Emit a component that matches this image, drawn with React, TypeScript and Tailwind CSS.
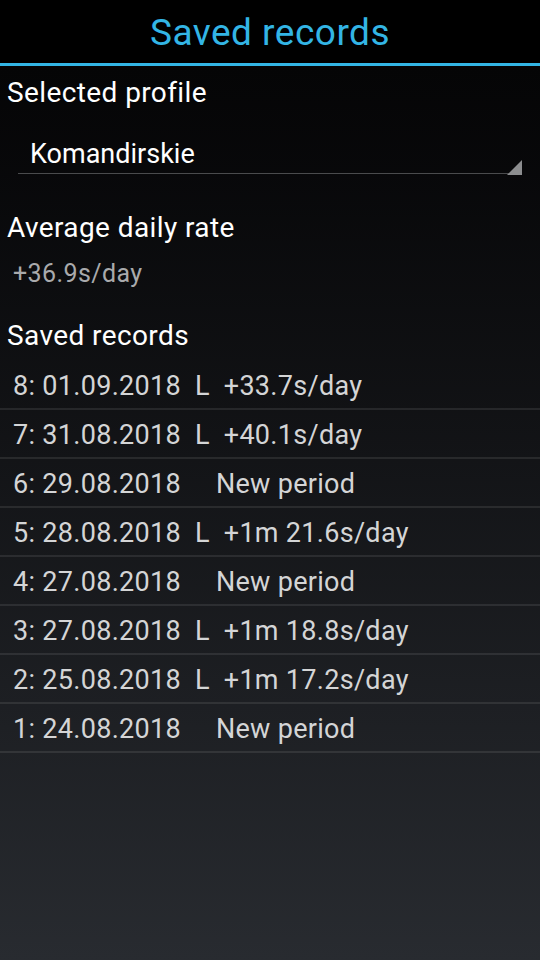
import React from "react";

const rows = [
  "8: 01.09.2018  L  +33.7s/day",
  "7: 31.08.2018  L  +40.1s/day",
  "6: 29.08.2018     New period",
  "5: 28.08.2018  L  +1m 21.6s/day",
  "4: 27.08.2018     New period",
  "3: 27.08.2018  L  +1m 18.8s/day",
  "2: 25.08.2018  L  +1m 17.2s/day",
  "1: 24.08.2018     New period",
];

export default function App() {
  return (
    <div className="w-full h-screen flex flex-col bg-black font-['Roboto',sans-serif] overflow-hidden">
      <div className="h-[63px] bg-black text-center text-[37px] leading-[66px] tracking-[0.5px] text-[#33b5e5]">
        Saved records
      </div>
      <div className="h-[3px] bg-[#33b5e5]" />
      <div className="flex-1 flex flex-col bg-linear-to-b from-[#050506] to-[#282b30]">
        <div className="mt-[9px] pl-[7px] text-[28px] leading-[36px] tracking-[0.4px] text-white">
          Selected profile
        </div>
        <div className="relative mt-[25px] mx-[18px] pb-[1px] border-b border-[#4a4b4d]">
          <div className="pl-[12px] text-[27px] leading-[36px] text-white">Komandirskie</div>
          <svg
            className="absolute right-0 bottom-[-2px]"
            width="15"
            height="15"
            viewBox="0 0 15 15"
          >
            <polygon points="15,0 15,15 0,15" fill="#8c8d8f" />
          </svg>
        </div>
        <div className="mt-[36px] pl-[7px] text-[28px] leading-[36px] tracking-[0.4px] text-white">
          Average daily rate
        </div>
        <div className="mt-[12px] pl-[13px] text-[25px] leading-[32px] tracking-[0.4px] text-[#a9aaac]">
          +36.9s/day
        </div>
        <div className="mt-[28px] pl-[7px] text-[28px] leading-[36px] tracking-[0.4px] text-white">
          Saved records
        </div>
        <div className="mt-[7px] flex flex-col">
          {rows.map((r) => (
            <div
              key={r}
              className="h-[49px] pt-[4px] pl-[13px] border-b-2 border-[#ffffff17] text-[27px] leading-[43px] tracking-[0.3px] text-[#d4d5d6] whitespace-pre"
            >
              {r}
            </div>
          ))}
        </div>
      </div>
    </div>
  );
}
